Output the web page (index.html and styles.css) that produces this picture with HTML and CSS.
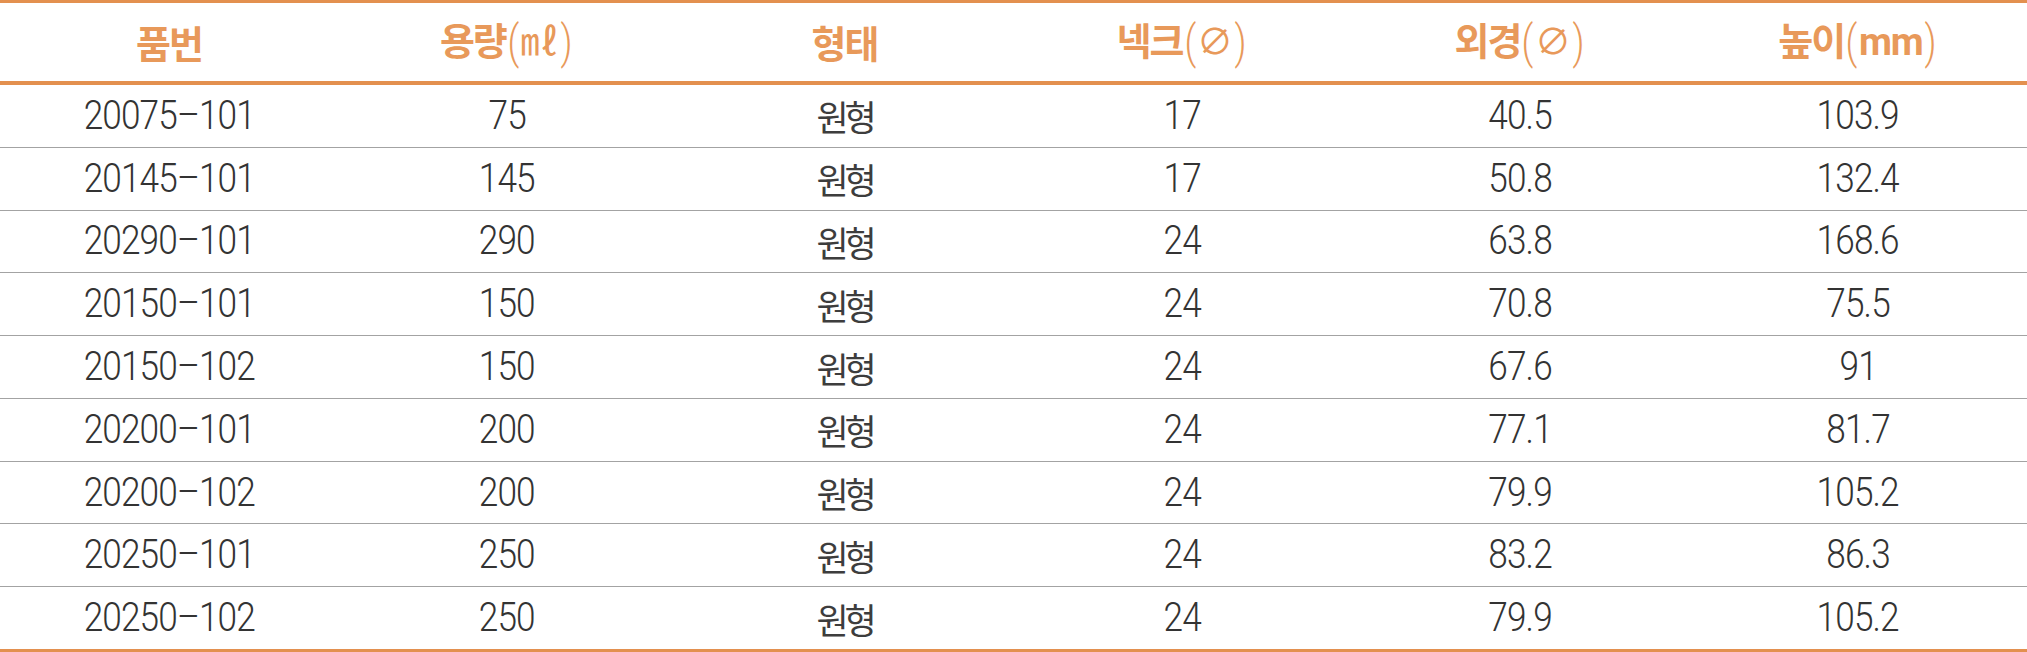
FILE: index.html
```html
<!DOCTYPE html>
<html lang="ko">
<head>
<meta charset="utf-8">
<link rel="stylesheet" href="styles.css">
</head>
<body>
<div class="spec">
  <div class="head">
    <div class="th">품번</div>
    <div class="th">용량<span class="p">(</span><span class="ml">㎖</span><span class="p">)</span></div>
    <div class="th">형태</div>
    <div class="th">넥크<span class="p">(</span><span class="o">∅</span><span class="p">)</span></div>
    <div class="th">외경<span class="p">(</span><span class="o">∅</span><span class="p">)</span></div>
    <div class="th">높이<span class="p">(</span><span class="mm">mm</span><span class="p">)</span></div>
  </div>
  <div class="row"><div class="td">20075–101</div><div class="td">75</div><div class="td ko">원형</div><div class="td">17</div><div class="td">40.5</div><div class="td">103.9</div></div>
  <div class="row"><div class="td">20145–101</div><div class="td">145</div><div class="td ko">원형</div><div class="td">17</div><div class="td">50.8</div><div class="td">132.4</div></div>
  <div class="row"><div class="td">20290–101</div><div class="td">290</div><div class="td ko">원형</div><div class="td">24</div><div class="td">63.8</div><div class="td">168.6</div></div>
  <div class="row"><div class="td">20150–101</div><div class="td">150</div><div class="td ko">원형</div><div class="td">24</div><div class="td">70.8</div><div class="td">75.5</div></div>
  <div class="row"><div class="td">20150–102</div><div class="td">150</div><div class="td ko">원형</div><div class="td">24</div><div class="td">67.6</div><div class="td">91</div></div>
  <div class="row"><div class="td">20200–101</div><div class="td">200</div><div class="td ko">원형</div><div class="td">24</div><div class="td">77.1</div><div class="td">81.7</div></div>
  <div class="row"><div class="td">20200–102</div><div class="td">200</div><div class="td ko">원형</div><div class="td">24</div><div class="td">79.9</div><div class="td">105.2</div></div>
  <div class="row"><div class="td">20250–101</div><div class="td">250</div><div class="td ko">원형</div><div class="td">24</div><div class="td">83.2</div><div class="td">86.3</div></div>
  <div class="row"><div class="td">20250–102</div><div class="td">250</div><div class="td ko">원형</div><div class="td">24</div><div class="td">79.9</div><div class="td">105.2</div></div>
</div>
</body>
</html>
```

FILE: styles.css
```css
html, body {
  margin: 0;
  padding: 0;
  background: #ffffff;
}

.spec {
  width: 2027px;
  height: 652px;
  box-sizing: border-box;
  border-top: 3px solid #e3904f;
  border-bottom: 3px solid #e3904f;
  display: flex;
  flex-direction: column;
}

.head,
.row {
  display: grid;
  grid-template-columns: repeat(6, 1fr);
  align-items: center;
  justify-items: center;
}

.head {
  height: 78px;
  flex: none;
  border-bottom: 4px solid #e3904f;
}

.row {
  flex: 1;
  border-bottom: 1px solid #a3a3a3;
}

.row:last-child {
  border-bottom: none;
}

.th {
  font-family: "Noto Sans CJK KR", "Liberation Sans", sans-serif;
  font-weight: 700;
  font-size: 38px;
  letter-spacing: -2px;
  color: #e8995a;
  line-height: 1;
  white-space: nowrap;
}

.th .p {
  font-family: "Roboto", "Liberation Sans", sans-serif;
  font-weight: 300;
  font-size: 46px;
  letter-spacing: 0;
  display: inline-block;
  vertical-align: -3px;
  transform: scaleX(0.8);
}

.th .ml {
  font-weight: 400;
  letter-spacing: 0;
}

.th .o {
  font-family: "DejaVu Sans", sans-serif;
  font-weight: 300;
  font-size: 36px;
  letter-spacing: 0;
}

.th .mm {
  font-family: "Roboto", "Liberation Sans", sans-serif;
  font-weight: 700;
  font-size: 38px;
  letter-spacing: -1px;
}

.td {
  font-family: "Roboto", "Liberation Sans", sans-serif;
  font-weight: 300;
  font-size: 40px;
  letter-spacing: -1px;
  color: #333333;
  line-height: 1;
  white-space: nowrap;
  transform: scaleX(0.88);
}

.td.ko {
  font-family: "Noto Sans CJK KR", sans-serif;
  font-weight: 400;
  font-size: 35px;
  letter-spacing: -4px;
  color: #3d3d3d;
  transform: none;
}
```
